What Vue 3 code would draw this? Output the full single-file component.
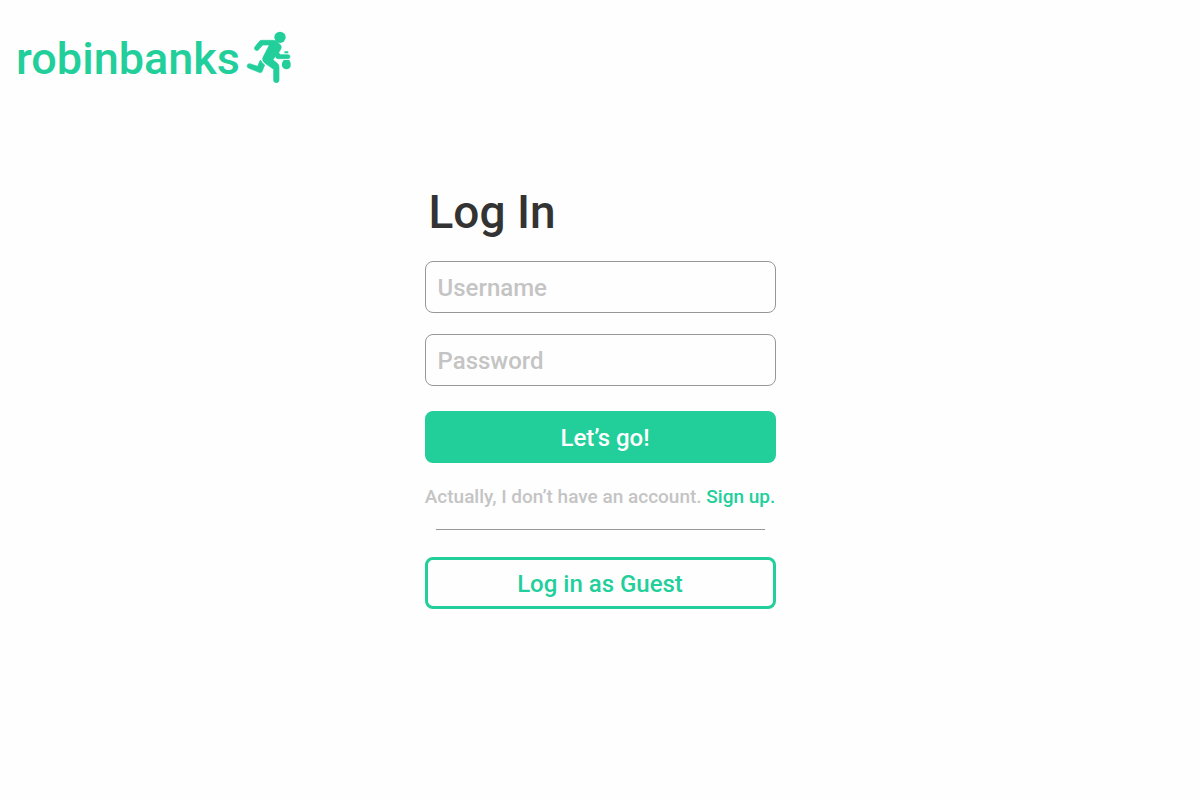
<script setup>
import { ref } from 'vue'

const username = ref('')
const password = ref('')
</script>

<template>
  <div class="page">
    <header class="brand">
      <span class="brand-name">robinbanks</span>
      <svg class="brand-icon" viewBox="30 21 138 159" aria-hidden="true">
        <g fill="currentColor">
          <circle cx="132" cy="40" r="17" />
          <path stroke="currentColor" stroke-width="2" stroke-linejoin="round" d="M77 49H112Q120 49 126 56L133 62Q138 69 134 76L128 86L133 92H156A6 6 0 0 1 156 104H125Q120 104 118 97L111 107L125 119Q129 123 129 130V168A8 8 0 0 1 113 168V136L89 119Q76 110 81 100L100 63H80L67 78A7 7 0 0 1 56 70L69 53Q72 49 77 49Z" />
          <path stroke="currentColor" stroke-width="2" stroke-linejoin="round" d="M73 108Q77 116 86 123L78 143Q75 147 69 145L37 132A7 7 0 0 1 41 119L65 127Z" />
          <rect x="145" y="82" width="12" height="6" rx="2" />
          <path d="M143 108H160L164 117V126Q161 136 151 136Q141 135 138 126V117Z" />
        </g>
      </svg>
    </header>

    <main class="login">
      <h1 class="title">Log In</h1>
      <form class="form" @submit.prevent>
        <input v-model="username" class="field" type="text" placeholder="Username" aria-label="Username" />
        <input v-model="password" class="field" type="password" placeholder="Password" aria-label="Password" />
        <button class="button primary" type="submit">Let’s go!</button>
      </form>
      <p class="signup">Actually, I don’t have an account. <a href="#">Sign up.</a></p>
      <hr class="divider" />
      <button class="button outline" type="button">Log in as Guest</button>
    </main>
  </div>
</template>

<style>
body {
  margin: 0;
  background: #fefefe;
}
</style>

<style scoped>
.page {
  --green: #22cf9b;
  font-family: Roboto, "Liberation Sans", sans-serif;
  font-weight: 500;
}

.brand {
  display: flex;
  align-items: flex-start;
  gap: 6px;
  padding: 31px 16px 0;
  color: var(--green);
}

.brand-name {
  font-size: 45px;
  line-height: 56px;
}

.brand-icon {
  width: 46px;
  height: 53px;
}

.login {
  box-sizing: border-box;
  width: 100%;
  max-width: 351px;
  margin: 97px auto 0;
}

.title {
  margin: 0;
  padding-left: 4px;
  color: #333;
  font-size: 46px;
  font-weight: 500;
  line-height: 56px;
}

.form {
  display: flex;
  flex-direction: column;
  margin-top: 21px;
}

.field {
  box-sizing: border-box;
  width: 100%;
  height: 52px;
  margin: 0 0 21px;
  padding: 1px 12px 0;
  border: 1px solid #979797;
  border-radius: 8px;
  background: transparent;
  color: #333;
  font: inherit;
  font-size: 24px;
}

.field::placeholder {
  color: #c4c4c4;
  opacity: 1;
}

.button {
  box-sizing: border-box;
  display: block;
  width: 100%;
  height: 52px;
  padding: 2px 0 0;
  border: 3px solid var(--green);
  border-radius: 8px;
  font: inherit;
  font-size: 24px;
  cursor: pointer;
}

.primary {
  margin-top: 4px;
  padding-left: 10px;
  background: var(--green);
  color: #fff;
}

.outline {
  background: transparent;
  color: var(--green);
}

.signup {
  margin: 22px 0 0;
  color: #c4c4c4;
  font-size: 19px;
  line-height: 24px;
  text-align: center;
  white-space: nowrap;
}

.signup a {
  color: var(--green);
  text-decoration: none;
}

.divider {
  height: 1px;
  margin: 20px 11px 27px;
  border: 0;
  background: #979797;
}
</style>
